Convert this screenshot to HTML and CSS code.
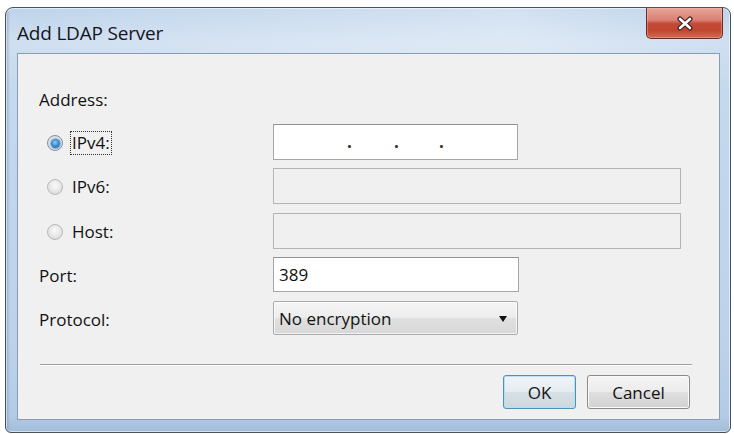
FILE: index.html
```html
<!DOCTYPE html>
<html>
<head>
<meta charset="utf-8">
<title>Add LDAP Server</title>
<link rel="stylesheet" href="styles.css">
</head>
<body>
<div class="window">
  <div class="titlebar">
    <span class="title">Add LDAP Server</span>
    <button class="close" aria-label="Close">
      <svg width="18" height="15" viewBox="0 0 18 15">
        <path d="M4 3 L14 12 M14 3 L4 12" stroke="#3b2220" stroke-width="5" stroke-linecap="round" fill="none"/>
        <path d="M4 3 L14 12 M14 3 L4 12" stroke="#ffffff" stroke-width="2.6" stroke-linecap="round" fill="none"/>
      </svg>
    </button>
  </div>
  <div class="client">
    <div class="group-label">Address:</div>
    <div class="form">
      <label class="radio-label"><span class="radio checked"><span class="dot-in"></span></span><span class="focus">IPv4:</span></label>
      <div class="field ip narrow"><span class="seg s1"></span><span class="ipdot">.</span><span class="seg s2"></span><span class="ipdot">.</span><span class="seg s3"></span><span class="ipdot">.</span><span class="seg"></span></div>

      <label class="radio-label"><span class="radio"></span><span class="rtext">IPv6:</span></label>
      <div class="field disabled wide"></div>

      <label class="radio-label"><span class="radio"></span><span class="rtext">Host:</span></label>
      <div class="field disabled wide"></div>

      <div class="label">Port:</div>
      <div class="field narrow port"><span class="value">389</span></div>

      <div class="label">Protocol:</div>
      <div class="select narrow"><span class="value">No encryption</span><span class="arrow"></span></div>
    </div>
    <div class="separator"></div>
    <div class="buttons">
      <button class="btn default">OK</button>
      <button class="btn cancel">Cancel</button>
    </div>
  </div>
</div>
</body>
</html>
```

FILE: styles.css
```css
* { box-sizing: border-box; }

html, body {
  margin: 0;
  padding: 0;
  background: #ffffff;
}

body {
  font-family: "Open Sans", "Noto Sans", sans-serif;
  color: #121212;
  width: 734px;
  height: 434px;
  overflow: hidden;
}

.window {
  margin: 7px 0 0 5px;
  width: 726px;
  height: 426px;
  border: 1px solid #48525c;
  border-radius: 8px 8px 6px 6px;
  background:
    linear-gradient(90deg, rgba(110,140,180,0.55) 0px, rgba(110,140,180,0) 4px),
    linear-gradient(180deg, #bdd3ea 0%, #cfdff1 8%, #c4d9ee 20%, #bcd2ea 80%, #b3cbe6 96%, #a3bcd8 100%);
  box-shadow: inset 0 0 0 1px rgba(255,255,255,0.55);
  display: flex;
  flex-direction: column;
}

.titlebar {
  height: 45px;
  display: flex;
  justify-content: space-between;
  align-items: flex-start;
  padding-left: 11px;
  padding-right: 7px;
  background: linear-gradient(90deg, rgba(255,255,255,0) 0%, rgba(255,255,255,0.2) 40%, rgba(255,255,255,0.32) 70%, rgba(255,255,255,0) 100%);
  border-radius: 7px 7px 0 0;
}

.title {
  font-size: 19px;
  line-height: 26px;
  margin-top: 12px;
  color: #15151c;
  letter-spacing: -0.2px;
}

.close {
  width: 77px;
  height: 31px;
  margin: 0;
  padding: 0;
  border: 1px solid #6a2b24;
  border-top: none;
  border-radius: 0 0 5px 5px;
  background: linear-gradient(180deg, #e6a496 0%, #d98173 40%, #c24a39 52%, #c2462f 75%, #d26c56 100%);
  box-shadow: inset 0 0 0 1px rgba(255,200,190,0.35);
  display: flex;
  align-items: center;
  justify-content: center;
}

.close svg { display: block; margin-top: 1px; }

.client {
  margin: 0 10px 0 11px;
  height: 367px;
  background: #f0f0f0;
  border: 1px solid #8a9cb0;
  padding-top: 35px;
}

.group-label {
  font-size: 17px;
  line-height: 22px;
  margin-left: 21px;
}

.form {
  margin-top: 13px;
  margin-left: 21px;
  display: grid;
  grid-template-columns: 234px auto;
  grid-auto-rows: 36px;
  row-gap: 8.25px;
  align-items: center;
  justify-items: start;
  font-size: 17px;
}

.label {
  line-height: 22px;
  margin-top: 2px;
}

.radio-label {
  display: flex;
  align-items: center;
  padding-left: 8px;
  margin-top: 2px;
}

.radio {
  width: 16px;
  height: 16px;
  border-radius: 50%;
  border: 1px solid #b5b9bd;
  background: radial-gradient(circle at 50% 40%, #fafafa 0%, #e6e6e6 55%, #cfcfcf 100%);
  display: flex;
  align-items: center;
  justify-content: center;
  margin-right: 8px;
  flex: none;
}

.radio.checked {
  border-color: #7f92a6;
  background: radial-gradient(circle, #e6ecf2 40%, #c3cfdb 100%);
}

.dot-in {
  width: 9px;
  height: 9px;
  border-radius: 50%;
  background: radial-gradient(circle at 45% 40%, #8fcdf3 0%, #3f8fd0 45%, #1b4f8c 100%);
  box-shadow: 0 0 0 1px rgba(30,70,120,0.35);
}

.focus {
  outline: 1px dotted #333;
  outline-offset: 0;
  padding: 0 1px;
  line-height: 22px;
}

.rtext {
  padding: 0 1px;
  line-height: 22px;
}

.field {
  height: 36px;
  border: 1px solid #a3a6ab;
  border-top-color: #8e9196;
  background: #ffffff;
  display: flex;
  align-items: center;
}

.field.narrow { width: 245px; }
.field.wide { width: 408px; }
.field.port { width: 246px; height: 35px; }

.field.disabled {
  background: #f0f0f0;
  border-color: #b1b4b8;
}

.ip .seg { width: 43px; height: 100%; }
.ip .seg.s1 { width: 73px; }
.ip .seg.s2 { width: 44px; }
.ip .seg.s3 { width: 42px; }

.ipdot {
  width: 3px;
  text-align: center;
  font-size: 17px;
  font-weight: 700;
  line-height: 20px;
  color: #333;
}

.value {
  padding-left: 5px;
  line-height: 22px;
  margin-top: 1px;
}

.select {
  width: 245px;
  height: 34px;
  align-self: start;
  border: 1px solid #a9abae;
  border-radius: 2px;
  background: linear-gradient(180deg, #f5f5f5 0%, #ededed 48%, #e0e0e0 52%, #d8d8d8 100%);
  box-shadow: inset 0 0 0 1px rgba(255,255,255,0.7);
  display: flex;
  align-items: center;
  justify-content: space-between;
}

.arrow {
  width: 0;
  height: 0;
  border-left: 4.5px solid transparent;
  border-right: 4.5px solid transparent;
  border-top: 6px solid #111;
  margin-right: 10px;
  margin-top: 2px;
}

.separator {
  margin: 27px 0 0 22px;
  width: 652px;
  height: 2px;
  border-top: 1px solid #a0a0a0;
  border-bottom: 1px solid #ffffff;
}

.buttons {
  display: flex;
  justify-content: flex-end;
  gap: 11px;
  margin-top: 9px;
  padding-right: 29px;
}

.btn {
  height: 34px;
  font-family: "Open Sans", "Noto Sans", sans-serif;
  font-size: 17px;
  color: #121212;
  border-radius: 3px;
  padding: 0;
  margin: 0;
}

.btn.default {
  width: 73px;
  border: 1px solid #4a93b8;
  background: linear-gradient(180deg, #eef3f6 0%, #e6edf1 48%, #d7e0e5 52%, #cdd7dc 100%);
  box-shadow: inset 0 0 0 1px #b7e0f2;
}

.btn.cancel {
  width: 103px;
  border: 1px solid #8a8a8a;
  background: linear-gradient(180deg, #f4f4f4 0%, #ececec 48%, #dedede 52%, #d2d2d2 100%);
  box-shadow: inset 0 0 0 1px #fafafa;
}
```
